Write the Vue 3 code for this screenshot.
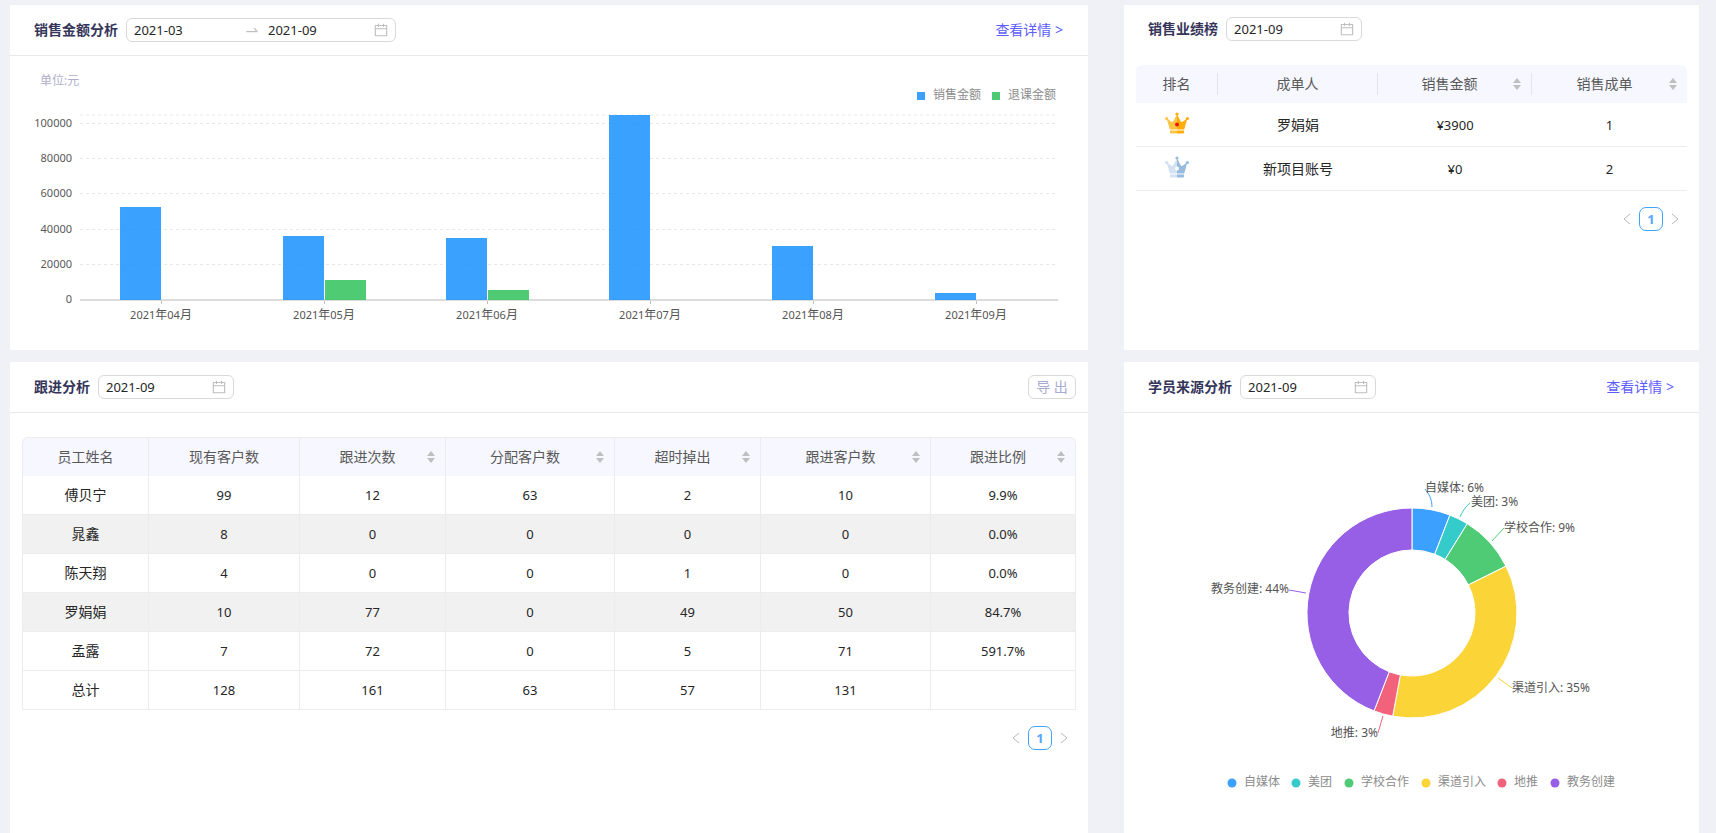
<script setup>
import { ref } from 'vue'

const calendarPath =
  'M880 184H712v-64c0-4.4-3.6-8-8-8h-56c-4.4 0-8 3.6-8 8v64H384v-64c0-4.4-3.6-8-8-8h-56c-4.4 0-8 3.6-8 8v64H144c-17.7 0-32 14.3-32 32v664c0 17.7 14.3 32 32 32h736c17.7 0 32-14.3 32-32V216c0-17.7-14.3-32-32-32zm-40 656H184V460h656v380zM184 392V256h128v48c0 4.4 3.6 8 8 8h56c4.4 0 8-3.6 8-8v-48h256v48c0 4.4 3.6 8 8 8h56c4.4 0 8-3.6 8-8v-48h128v136H184z'

const rangeStart = ref('2021-03')
const rangeEnd = ref('2021-09')
const rankMonth = ref('2021-09')
const followMonth = ref('2021-09')
const sourceMonth = ref('2021-09')

// Bar chart
const axisY = 244
const plotLeft = 70
const plotRight = 1048
const step = 163
const barWidth = 41
const toHeight = (v) => Math.round(v * 0.00176)
const ticks = [0, 20000, 40000, 60000, 80000, 100000].map((v) => ({
  v,
  y: axisY - toHeight(v)
}))
const months = [
  { m: '04', sale: 52800, refund: 0 },
  { m: '05', sale: 36200, refund: 11300 },
  { m: '06', sale: 35200, refund: 5700 },
  { m: '07', sale: 105100, refund: 0 },
  { m: '08', sale: 30900, refund: 0 },
  { m: '09', sale: 3900, refund: 0 }
].map((d, i) => ({
  ...d,
  x: plotLeft + (step - 1) / 2 + step * i,
  saleH: toHeight(d.sale),
  refundH: toHeight(d.refund)
}))

// Ranking
const rankCols = [
  { t: '排名', w: 82 },
  { t: '成单人', w: 160 },
  { t: '销售金额', w: 154, sort: true },
  { t: '销售成单', w: 155, sort: true }
]
const ranks = [
  { name: '罗娟娟', amount: '¥3900', count: 1, light: '#fcc645', dark: '#ffad0c', gem: '#f5120a' },
  { name: '新项目账号', amount: '¥0', count: 2, light: '#d3e1f0', dark: '#98badd', gem: '#ffffff' }
]

// Follow-up
const followCols = [
  { t: '员工姓名', w: 127 },
  { t: '现有客户数', w: 151 },
  { t: '跟进次数', w: 146, sort: true },
  { t: '分配客户数', w: 169, sort: true },
  { t: '超时掉出', w: 146, sort: true },
  { t: '跟进客户数', w: 170, sort: true },
  { t: '跟进比例', w: 145, sort: true }
]
const followRows = [
  ['傅贝宁', '99', '12', '63', '2', '10', '9.9%'],
  ['晁鑫', '8', '0', '0', '0', '0', '0.0%'],
  ['陈天翔', '4', '0', '0', '1', '0', '0.0%'],
  ['罗娟娟', '10', '77', '0', '49', '50', '84.7%'],
  ['孟露', '7', '72', '0', '5', '71', '591.7%'],
  ['总计', '128', '161', '63', '57', '131', '']
]

// Donut
const cx = 288
const cy = 200
const outer = 105
const inner = 63
const sources = [
  { name: '自媒体', n: 2, pct: 6, color: '#3ba0ff', lx: 301, ly: 79, line: 'M308 94C308 86 305 81 301 76', dot: 108 },
  { name: '美团', n: 1, pct: 3, color: '#36cbcb', lx: 347, ly: 93, line: 'M336 104C338 99 342 93 346 90', dot: 172 },
  { name: '学校合作', n: 3, pct: 9, color: '#4ecb74', lx: 380, ly: 119, line: 'M368 128L380 115', dot: 225 },
  { name: '渠道引入', n: 12, pct: 35, color: '#fbd437', lx: 388, ly: 279, line: 'M374 265L388 275', dot: 302 },
  { name: '地推', n: 1, pct: 3, color: '#f2637b', lx: 254, ly: 324, line: 'M259 303L254 320', end: true, dot: 378 },
  { name: '教务创建', n: 15, pct: 44, color: '#975fe5', lx: 165, ly: 180, line: 'M182 180L165 177', end: true, dot: 431 }
]
const total = sources.reduce((s, d) => s + d.n, 0)
const point = (r, a) => `${(cx + r * Math.sin(a)).toFixed(2)} ${(cy - r * Math.cos(a)).toFixed(2)}`
let angle = 0
const slices = sources.map((d) => {
  const a0 = angle
  const a1 = angle + (d.n / total) * Math.PI * 2
  angle = a1
  return {
    ...d,
    path: `M${point(outer, a0)}A${outer} ${outer} 0 0 1 ${point(outer, a1)}L${point(inner, a1)}A${inner} ${inner} 0 0 0 ${point(inner, a0)}Z`
  }
})
</script>

<template>
  <main class="board">
    <section class="card">
      <header class="head lined">
        <label class="title" for="range-start">销售金额分析</label>
        <div class="picker range">
          <input id="range-start" v-model="rangeStart" class="start" type="text" />
          <svg class="ico arrow" viewBox="0 0 1024 1024" aria-hidden="true">
            <path d="M873.1 596.2l-164-208A32 32 0 0 0 684 376h-64.8c-6.7 0-10.4 7.7-6.3 13l144.3 183H152c-4.4 0-8 3.6-8 8v60c0 4.4 3.6 8 8 8h695.9c26.8 0 41.7-30.8 25.2-51.8z" />
          </svg>
          <input v-model="rangeEnd" type="text" aria-label="结束月份" />
          <svg class="ico" viewBox="0 0 1024 1024" aria-hidden="true"><path :d="calendarPath" /></svg>
        </div>
        <a class="more" href="#">查看详情 &gt;</a>
      </header>
      <svg class="chart" viewBox="0 0 1078 294" role="img" aria-label="销售金额分析">
        <text class="unit" x="30" y="29">单位:元</text>
        <rect x="907" y="36" width="8" height="8" fill="#3ba0ff" />
        <text class="legend" x="923" y="43">销售金额</text>
        <rect x="982" y="36" width="8" height="8" fill="#4ecb74" />
        <text class="legend" x="998" y="43">退课金额</text>
        <line class="grid top" :x1="plotLeft" :x2="plotRight" y1="59" y2="59" />
        <g v-for="t in ticks" :key="t.v">
          <line v-if="t.v" class="grid" :x1="plotLeft" :x2="plotRight" :y1="t.y - 0.5" :y2="t.y - 0.5" />
          <text class="tick" x="62" :y="t.y + 3">{{ t.v }}</text>
        </g>
        <line class="axis" :x1="plotLeft" :x2="plotRight" :y1="axisY" :y2="axisY" />
        <g v-for="d in months" :key="d.m">
          <rect class="sale" :x="d.x - barWidth" :y="axisY - d.saleH" :width="barWidth" :height="d.saleH" />
          <rect class="refund" :x="d.x + 1" :y="axisY - d.refundH" :width="barWidth" :height="d.refundH" />
          <line class="mark" :x1="d.x + 0.5" :x2="d.x + 0.5" :y1="axisY + 1" :y2="axisY + 4" />
          <text class="month" :x="d.x" :y="axisY + 19">2021<tspan class="han">年</tspan>{{ d.m }}<tspan class="han">月</tspan></text>
        </g>
      </svg>
    </section>

    <section class="card">
      <header class="head">
        <label class="title" for="rank-month">销售业绩榜</label>
        <div class="picker">
          <input id="rank-month" v-model="rankMonth" type="text" />
          <svg class="ico" viewBox="0 0 1024 1024" aria-hidden="true"><path :d="calendarPath" /></svg>
        </div>
      </header>
      <div class="body rank-body">
        <table class="rank">
          <colgroup><col v-for="c in rankCols" :key="c.t" :width="c.w" /></colgroup>
          <thead>
            <tr>
              <th v-for="c in rankCols" :key="c.t" scope="col">
                <div class="th">
                  <span>{{ c.t }}</span>
                  <button v-if="c.sort" type="button" class="sort" :aria-label="c.t + '排序'">
                    <svg viewBox="0 0 8 12" aria-hidden="true"><path d="M4 0l4 5H0zM0 7h8l-4 5z" /></svg>
                  </button>
                </div>
              </th>
            </tr>
          </thead>
          <tbody>
            <tr v-for="r in ranks" :key="r.name">
              <td>
                <svg class="crown" viewBox="0 0 24 26" aria-hidden="true">
                  <path :fill="r.light" d="M12 2L8.500 9Q7.500 10.500 6 9.500L1.500 6L4.800 17.500H12z" />
                  <path :fill="r.dark" d="M12 2L15.500 9Q16.500 10.500 18 9.500L22.500 6L19.200 17.500H12z" />
                  <path :fill="r.light" d="M5 18.500H12V21.500H6Q5 21.500 5 20.500z" />
                  <path :fill="r.dark" d="M12 18.500H19V20.500Q19 21.500 18 21.500H12z" />
                  <circle cx="1.600" cy="6.500" r="1.600" :fill="r.light" />
                  <circle cx="22.400" cy="6.500" r="1.600" :fill="r.dark" />
                  <circle cx="12" cy="2" r="1.600" :fill="r.dark" />
                  <circle cx="12" cy="12.500" r="2" :fill="r.gem" />
                </svg>
              </td>
              <td>{{ r.name }}</td>
              <td class="num">{{ r.amount }}</td>
              <td class="num">{{ r.count }}</td>
            </tr>
          </tbody>
        </table>
        <nav class="pager" aria-label="销售业绩榜分页">
          <button type="button" aria-label="上一页"><svg viewBox="0 0 8 12"><path d="M7 1L1 6l6 5" /></svg></button>
          <button type="button" class="page">1</button>
          <button type="button" aria-label="下一页"><svg viewBox="0 0 8 12"><path d="M1 1l6 5-6 5" /></svg></button>
        </nav>
      </div>
    </section>

    <section class="card">
      <header class="head lined">
        <label class="title" for="follow-month">跟进分析</label>
        <div class="picker">
          <input id="follow-month" v-model="followMonth" type="text" />
          <svg class="ico" viewBox="0 0 1024 1024" aria-hidden="true"><path :d="calendarPath" /></svg>
        </div>
        <button type="button" class="export">导 出</button>
      </header>
      <div class="body follow-body">
        <table class="follow">
          <colgroup><col v-for="c in followCols" :key="c.t" :width="c.w" /></colgroup>
          <thead>
            <tr>
              <th v-for="c in followCols" :key="c.t" scope="col">
                <div class="th">
                  <span>{{ c.t }}</span>
                  <button v-if="c.sort" type="button" class="sort" :aria-label="c.t + '排序'">
                    <svg viewBox="0 0 8 12" aria-hidden="true"><path d="M4 0l4 5H0zM0 7h8l-4 5z" /></svg>
                  </button>
                </div>
              </th>
            </tr>
          </thead>
          <tbody>
            <tr v-for="row in followRows" :key="row[0]">
              <td v-for="(v, i) in row" :key="i" :class="{ num: i > 0 }">{{ v }}</td>
            </tr>
          </tbody>
        </table>
        <nav class="pager" aria-label="跟进分析分页">
          <button type="button" aria-label="上一页"><svg viewBox="0 0 8 12"><path d="M7 1L1 6l6 5" /></svg></button>
          <button type="button" class="page">1</button>
          <button type="button" aria-label="下一页"><svg viewBox="0 0 8 12"><path d="M1 1l6 5-6 5" /></svg></button>
        </nav>
      </div>
    </section>

    <section class="card">
      <header class="head lined">
        <label class="title" for="source-month">学员来源分析</label>
        <div class="picker">
          <input id="source-month" v-model="sourceMonth" type="text" />
          <svg class="ico" viewBox="0 0 1024 1024" aria-hidden="true"><path :d="calendarPath" /></svg>
        </div>
        <a class="more" href="#">查看详情 &gt;</a>
      </header>
      <svg class="chart" viewBox="0 0 575 420" role="img" aria-label="学员来源分析">
        <path v-for="s in slices" :key="s.name" class="slice" :d="s.path" :fill="s.color" />
        <g v-for="s in slices" :key="s.name">
          <path class="lead" :d="s.line" :stroke="s.color" />
          <text class="label" :class="{ end: s.end }" :x="s.lx" :y="s.ly">{{ s.name }}: {{ s.pct }}%</text>
          <circle :cx="s.dot" cy="370" r="4.500" :fill="s.color" />
          <text class="legend" :x="s.dot + 12" y="373">{{ s.name }}</text>
        </g>
      </svg>
    </section>
  </main>
</template>

<style>
body {
  background: #f0f1f6;
}
</style>

<style scoped>
.board {
  box-sizing: border-box;
  min-height: 100vh;
  display: grid;
  grid-template-columns: 15fr 8fr;
  grid-template-rows: auto 1fr;
  gap: 12px 36px;
  padding: 5px 17px 0 10px;
  font-family: "Noto Sans", "Noto Sans CJK SC", sans-serif;
  font-size: 14px;
  line-height: 20px;
  color: #262626;
}
.card {
  background: #fff;
  min-width: 0;
}
.head {
  display: flex;
  align-items: center;
  gap: 8px;
  height: 48px;
  padding: 0 25px 0 24px;
}
.head.lined {
  height: 50px;
  border-bottom: 1px solid #e8e8e8;
}
.title {
  font-weight: 700;
  color: #35355a;
}
.picker {
  box-sizing: border-box;
  display: flex;
  align-items: center;
  width: 136px;
  height: 24px;
  padding: 0 6px 0 7px;
  border: 1px solid #d9d9d9;
  border-radius: 6px;
}
.picker.range {
  width: 270px;
}
.picker input {
  flex: 1;
  width: 0;
  min-width: 0;
  padding: 0;
  border: 0;
  outline: 0;
  background: none;
  font-family: inherit;
  font-size: 13px;
  color: #262626;
}
.picker input.start {
  flex: none;
  width: 110px;
}
.ico {
  width: 16px;
  height: 16px;
  flex: none;
  fill: #bfbfbf;
}
.arrow {
  margin-right: 8px;
}
.more {
  margin-left: auto;
  color: #5d5dff;
  text-decoration: none;
}
.export {
  box-sizing: border-box;
  width: 48px;
  height: 24px;
  margin: 0 -13px 0 auto;
  padding: 0;
  border: 1px solid #d9d9d9;
  border-radius: 6px;
  background: #fff;
  font-family: inherit;
  font-size: 14px;
  line-height: 20px;
  color: #a9acd0;
}
.chart {
  display: block;
  width: 100%;
  height: auto;
  font-size: 12px;
}
.unit {
  fill: #aeaecb;
}
.legend {
  fill: #8c8c8c;
}
.grid {
  stroke: #e8e8e8;
  stroke-dasharray: 3 3;
}
.grid.top {
  stroke: #f3f3f3;
  stroke-width: 2;
}
.axis {
  stroke: #dcdcdc;
  stroke-width: 2;
}
.mark {
  stroke: #bfbfbf;
}
.tick {
  font-size: 11px;
  text-anchor: end;
  fill: #595959;
}
.month {
  font-size: 11px;
  text-anchor: middle;
  fill: #545454;
}
.han {
  font-size: 12px;
}
.sale {
  fill: #1890ff;
  opacity: 0.85;
}
.refund {
  fill: #2fc25b;
  opacity: 0.85;
}
.slice {
  stroke: #fff;
}
.lead {
  fill: none;
}
.label {
  fill: #545454;
}
.label.end {
  text-anchor: end;
}
.body {
  padding: 24px 12px 16px;
}
.rank-body {
  padding-top: 12px;
}
table {
  width: 100%;
  table-layout: fixed;
  border-collapse: separate;
  border-spacing: 0;
}
th {
  height: 38px;
  padding: 0;
  background: #f6f7ff;
  font-weight: 400;
  color: #595959;
}
.th {
  display: flex;
  align-items: center;
  gap: 2px;
  height: 22px;
  padding: 0 10px;
}
.th span {
  flex: 1;
}
.sort {
  width: 8px;
  height: 12px;
  padding: 0;
  border: 0;
  background: none;
}
.sort svg {
  display: block;
  width: 8px;
  height: 12px;
  fill: #bfbfbf;
}
td {
  box-sizing: border-box;
  padding: 0;
  text-align: center;
  border-bottom: 1px solid #ececec;
}
td.num {
  font-size: 13px;
}
.rank td {
  height: 44px;
}
.rank th:not(:last-child) .th {
  border-right: 1px solid #e3e4ee;
}
.rank th:first-child {
  border-top-left-radius: 6px;
}
.rank th:last-child {
  border-top-right-radius: 6px;
}
.crown {
  display: block;
  width: 24px;
  height: 26px;
  margin: 0 auto;
}
.follow th {
  border-top: 1px solid #ececec;
  border-right: 1px solid #ececec;
}
.follow td {
  height: 39px;
  border-right: 1px solid #ececec;
}
.follow th:first-child,
.follow td:first-child {
  border-left: 1px solid #ececec;
}
.follow th:first-child {
  border-top-left-radius: 6px;
}
.follow th:last-child {
  border-top-right-radius: 6px;
}
.follow tbody tr:nth-child(even):not(:last-child) td {
  background: #f1f1f1;
}
.pager {
  display: flex;
  justify-content: flex-end;
  margin-top: 16px;
}
.pager button {
  box-sizing: border-box;
  display: flex;
  align-items: center;
  justify-content: center;
  width: 24px;
  height: 24px;
  padding: 0;
  border: 0;
  background: none;
}
.pager .page {
  border: 1px solid #40a4ff;
  border-radius: 7px;
  font-family: inherit;
  font-size: 13px;
  font-weight: 700;
  color: #5aa5ff;
}
.pager svg {
  width: 8px;
  height: 12px;
  fill: none;
  stroke: #b8b8b8;
}
</style>
